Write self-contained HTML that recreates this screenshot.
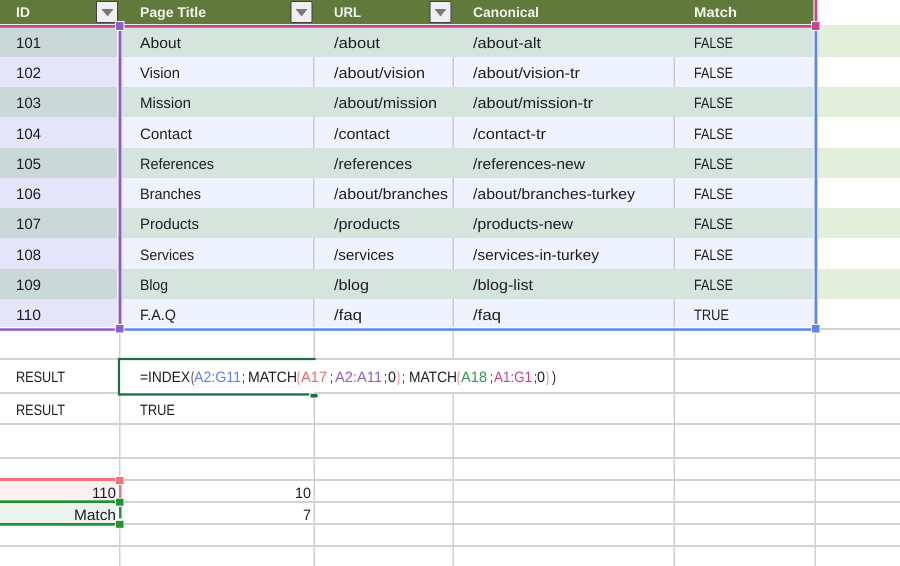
<!DOCTYPE html>
<html><head><meta charset="utf-8"><style>
html,body{margin:0;padding:0;background:#fff;width:900px;height:566px;overflow:hidden}
svg{display:block}
text{font-family:"Liberation Sans",sans-serif;font-size:15px;fill:#1c1c24;text-rendering:geometricPrecision}
.h{font-weight:bold;fill:#f2f4ec;font-size:14px}
</style></head><body>
<svg width="900" height="566" viewBox="0 0 900 566" xmlns="http://www.w3.org/2000/svg">
<rect width="900" height="566" fill="#fff"/>
<!-- header -->
<rect x="0" y="0" width="813.500" height="24" fill="#5f7a3b"/>
<!-- rows -->
<g fill="#d5e5dd">
<rect y="27" width="815" height="30"/><rect y="87" width="815" height="30"/><rect y="148" width="815" height="30"/><rect y="208" width="815" height="30"/><rect y="269" width="815" height="30"/>
</g>
<g fill="#eff2ff">
<rect y="57" width="815" height="30"/><rect y="117" width="815" height="31"/><rect y="178" width="815" height="30"/><rect y="238" width="815" height="31"/><rect y="299" width="815" height="28"/>
</g>
<g fill="#cbd8d8">
<rect y="27" width="117" height="30"/><rect y="87" width="117" height="30"/><rect y="148" width="117" height="30"/><rect y="208" width="117" height="30"/><rect y="269" width="117" height="30"/>
</g>
<g fill="#e5e4f9">
<rect y="57" width="117" height="30"/><rect y="117" width="117" height="31"/><rect y="178" width="117" height="30"/><rect y="238" width="117" height="31"/><rect y="299" width="117" height="28"/>
</g>
<g fill="#e3eedb">
<rect x="818" y="25" width="82" height="32"/><rect x="818" y="87" width="82" height="30"/><rect x="818" y="148" width="82" height="30"/><rect x="818" y="208" width="82" height="30"/><rect x="818" y="269" width="82" height="30"/>
</g>
<!-- white halo around range borders -->
<g fill="#fff">
<rect x="117" y="24" width="5" height="305"/>
<rect x="813.500" y="24" width="4.500" height="305"/>
</g>
<!-- separators on light rows -->
<g fill="#c9cad4">
<rect x="313" y="57" width="1.5" height="30"/><rect x="452.500" y="57" width="1.500" height="30"/><rect x="673.500" y="57" width="1.500" height="30"/>
<rect x="313" y="117" width="1.5" height="31"/><rect x="452.500" y="117" width="1.500" height="31"/><rect x="673.500" y="117" width="1.500" height="31"/>
<rect x="313" y="178" width="1.5" height="30"/><rect x="452.500" y="178" width="1.500" height="30"/><rect x="673.500" y="178" width="1.500" height="30"/>
<rect x="313" y="238" width="1.5" height="31"/><rect x="452.500" y="238" width="1.500" height="31"/><rect x="673.500" y="238" width="1.500" height="31"/>
<rect x="313" y="299" width="1.5" height="28"/><rect x="452.500" y="299" width="1.500" height="28"/><rect x="673.500" y="299" width="1.500" height="28"/>
</g>
<!-- lower grid -->
<g fill="#d2d2d2">
<rect x="818" y="328" width="82" height="2"/>
<rect x="0" y="358" width="900" height="2"/>
<rect x="0" y="392" width="900" height="2"/>
<rect x="0" y="423" width="900" height="2"/>
<rect x="0" y="457" width="900" height="2"/>
<rect x="0" y="479" width="900" height="2"/>
<rect x="0" y="501" width="900" height="2"/>
<rect x="0" y="523" width="900" height="2"/>
<rect x="0" y="545" width="900" height="2"/>
<rect x="119" y="330" width="1.500" height="236"/>
<rect x="313.500" y="330" width="1.500" height="236"/>
<rect x="452.500" y="330" width="1.500" height="236"/>
<rect x="673.500" y="330" width="1.500" height="236"/>
<rect x="814.500" y="330" width="1.500" height="236"/>
</g>
<!-- bottom highlighted cells -->
<rect x="0" y="481" width="116" height="19" fill="#fdf0f0"/>
<rect x="0" y="503" width="116" height="20" fill="#eaf4ec"/>
<!-- header text -->
<text class="h" x="16" y="17" textLength="14" lengthAdjust="spacingAndGlyphs">ID</text>
<text class="h" x="140" y="17" textLength="66" lengthAdjust="spacingAndGlyphs">Page Title</text>
<text class="h" x="334" y="17" textLength="27" lengthAdjust="spacingAndGlyphs">URL</text>
<text class="h" x="473" y="17" textLength="66" lengthAdjust="spacingAndGlyphs">Canonical</text>
<text class="h" x="694" y="17" textLength="43" lengthAdjust="spacingAndGlyphs">Match</text>
<!-- dropdown buttons -->
<g stroke="#3f3f46" stroke-width="1" fill="#f1eef1">
<rect x="96.500" y="1.500" width="21" height="21" rx="1"/>
<rect x="291" y="1.500" width="21" height="21" rx="1"/>
<rect x="430" y="1.500" width="21" height="21" rx="1"/>
</g>
<g fill="#77777c">
<path d="M101.500 9h12l-6 7.500z"/><path d="M295.500 9h12l-6 7.500z"/><path d="M434.500 9h12l-6 7.500z"/>
</g>
<!-- data -->
<g>
<text x="16" y="48" textLength="25" lengthAdjust="spacingAndGlyphs">101</text>
<text x="140" y="48" textLength="41" lengthAdjust="spacingAndGlyphs">About</text>
<text x="334" y="48" textLength="46" lengthAdjust="spacingAndGlyphs">/about</text>
<text x="473" y="48" textLength="68" lengthAdjust="spacingAndGlyphs">/about-alt</text>
<text x="694" y="48" textLength="39" lengthAdjust="spacingAndGlyphs">FALSE</text>

<text x="16" y="78" textLength="25" lengthAdjust="spacingAndGlyphs">102</text>
<text x="140" y="78" textLength="40" lengthAdjust="spacingAndGlyphs">Vision</text>
<text x="334" y="78" textLength="91" lengthAdjust="spacingAndGlyphs">/about/vision</text>
<text x="473" y="78" textLength="107" lengthAdjust="spacingAndGlyphs">/about/vision-tr</text>
<text x="694" y="78" textLength="39" lengthAdjust="spacingAndGlyphs">FALSE</text>

<text x="16" y="108" textLength="25" lengthAdjust="spacingAndGlyphs">103</text>
<text x="140" y="108" textLength="51" lengthAdjust="spacingAndGlyphs">Mission</text>
<text x="334" y="108" textLength="103" lengthAdjust="spacingAndGlyphs">/about/mission</text>
<text x="473" y="108" textLength="120" lengthAdjust="spacingAndGlyphs">/about/mission-tr</text>
<text x="694" y="108" textLength="39" lengthAdjust="spacingAndGlyphs">FALSE</text>

<text x="16" y="139" textLength="25" lengthAdjust="spacingAndGlyphs">104</text>
<text x="140" y="139" textLength="52" lengthAdjust="spacingAndGlyphs">Contact</text>
<text x="334" y="139" textLength="56" lengthAdjust="spacingAndGlyphs">/contact</text>
<text x="473" y="139" textLength="73" lengthAdjust="spacingAndGlyphs">/contact-tr</text>
<text x="694" y="139" textLength="39" lengthAdjust="spacingAndGlyphs">FALSE</text>

<text x="16" y="169" textLength="25" lengthAdjust="spacingAndGlyphs">105</text>
<text x="140" y="169" textLength="74" lengthAdjust="spacingAndGlyphs">References</text>
<text x="334" y="169" textLength="78" lengthAdjust="spacingAndGlyphs">/references</text>
<text x="473" y="169" textLength="112" lengthAdjust="spacingAndGlyphs">/references-new</text>
<text x="694" y="169" textLength="39" lengthAdjust="spacingAndGlyphs">FALSE</text>

<text x="16" y="199" textLength="25" lengthAdjust="spacingAndGlyphs">106</text>
<text x="140" y="199" textLength="61" lengthAdjust="spacingAndGlyphs">Branches</text>
<text x="334" y="199" textLength="114" lengthAdjust="spacingAndGlyphs">/about/branches</text>
<text x="473" y="199" textLength="162" lengthAdjust="spacingAndGlyphs">/about/branches-turkey</text>
<text x="694" y="199" textLength="39" lengthAdjust="spacingAndGlyphs">FALSE</text>

<text x="16" y="229" textLength="25" lengthAdjust="spacingAndGlyphs">107</text>
<text x="140" y="229" textLength="59" lengthAdjust="spacingAndGlyphs">Products</text>
<text x="334" y="229" textLength="66" lengthAdjust="spacingAndGlyphs">/products</text>
<text x="473" y="229" textLength="100" lengthAdjust="spacingAndGlyphs">/products-new</text>
<text x="694" y="229" textLength="39" lengthAdjust="spacingAndGlyphs">FALSE</text>

<text x="16" y="260" textLength="25" lengthAdjust="spacingAndGlyphs">108</text>
<text x="140" y="260" textLength="54" lengthAdjust="spacingAndGlyphs">Services</text>
<text x="334" y="260" textLength="60" lengthAdjust="spacingAndGlyphs">/services</text>
<text x="473" y="260" textLength="126" lengthAdjust="spacingAndGlyphs">/services-in-turkey</text>
<text x="694" y="260" textLength="39" lengthAdjust="spacingAndGlyphs">FALSE</text>

<text x="16" y="290" textLength="25" lengthAdjust="spacingAndGlyphs">109</text>
<text x="140" y="290" textLength="28" lengthAdjust="spacingAndGlyphs">Blog</text>
<text x="334" y="290" textLength="35" lengthAdjust="spacingAndGlyphs">/blog</text>
<text x="473" y="290" textLength="60" lengthAdjust="spacingAndGlyphs">/blog-list</text>
<text x="694" y="290" textLength="39" lengthAdjust="spacingAndGlyphs">FALSE</text>

<text x="16" y="320" textLength="25" lengthAdjust="spacingAndGlyphs">110</text>
<text x="140" y="320" textLength="36" lengthAdjust="spacingAndGlyphs">F.A.Q</text>
<text x="334" y="320" textLength="28" lengthAdjust="spacingAndGlyphs">/faq</text>
<text x="473" y="320" textLength="28" lengthAdjust="spacingAndGlyphs">/faq</text>
<text x="694" y="320" textLength="35" lengthAdjust="spacingAndGlyphs">TRUE</text>

<text x="16" y="382" textLength="49" lengthAdjust="spacingAndGlyphs">RESULT</text>
<text x="16" y="415" textLength="49" lengthAdjust="spacingAndGlyphs">RESULT</text>
<text x="140" y="415" textLength="35" lengthAdjust="spacingAndGlyphs">TRUE</text>

<text x="92" y="498" textLength="24" lengthAdjust="spacingAndGlyphs">110</text>
<text x="74" y="520" textLength="42" lengthAdjust="spacingAndGlyphs">Match</text>
<text x="295" y="498" textLength="16" lengthAdjust="spacingAndGlyphs">10</text>
<text x="303" y="520" textLength="8" lengthAdjust="spacingAndGlyphs">7</text>
</g>
<!-- formula -->
<rect x="119" y="360" width="195" height="33" fill="#fff"/>
<rect x="314" y="360" width="260" height="32" fill="#fff"/>
<text x="140" y="382" textLength="50" lengthAdjust="spacingAndGlyphs">=INDEX</text>
<text x="191" y="382" style="fill:#1c1c24" textLength="3" lengthAdjust="spacingAndGlyphs">(</text>
<text x="194" y="382" style="fill:#5b86ee" textLength="47" lengthAdjust="spacingAndGlyphs">A2:G11</text>
<text x="242" y="382" textLength="3" lengthAdjust="spacingAndGlyphs">;</text>
<text x="248" y="382" textLength="49" lengthAdjust="spacingAndGlyphs">MATCH</text>
<text x="297" y="382" style="fill:#f0686f" textLength="3" lengthAdjust="spacingAndGlyphs">(</text>
<text x="301" y="382" style="fill:#f0686f" textLength="26" lengthAdjust="spacingAndGlyphs">A17</text>
<text x="330" y="382" textLength="3" lengthAdjust="spacingAndGlyphs">;</text>
<text x="335" y="382" style="fill:#8e62c8" textLength="47" lengthAdjust="spacingAndGlyphs">A2:A11</text>
<text x="384" y="382" textLength="3" lengthAdjust="spacingAndGlyphs">;</text>
<text x="388" y="382" textLength="8" lengthAdjust="spacingAndGlyphs">0</text>
<text x="397" y="382" style="fill:#f0686f" textLength="3" lengthAdjust="spacingAndGlyphs">)</text>
<text x="402" y="382" textLength="3" lengthAdjust="spacingAndGlyphs">;</text>
<text x="409" y="382" textLength="48" lengthAdjust="spacingAndGlyphs">MATCH</text>
<text x="457" y="382" style="fill:#e8707a" textLength="3" lengthAdjust="spacingAndGlyphs">(</text>
<text x="461" y="382" style="fill:#2f9a4a" textLength="26" lengthAdjust="spacingAndGlyphs">A18</text>
<text x="490" y="382" textLength="3" lengthAdjust="spacingAndGlyphs">;</text>
<text x="494" y="382" style="fill:#c8448e" textLength="38" lengthAdjust="spacingAndGlyphs">A1:G1</text>
<text x="534" y="382" textLength="3" lengthAdjust="spacingAndGlyphs">;</text>
<text x="537" y="382" textLength="8" lengthAdjust="spacingAndGlyphs">0</text>
<text x="546" y="382" style="fill:#e8707a" textLength="3" lengthAdjust="spacingAndGlyphs">)</text>
<text x="552" y="382" textLength="4" lengthAdjust="spacingAndGlyphs">)</text>
<!-- range borders -->
<rect x="0" y="24" width="814" height="1" fill="#e9efe2"/>
<rect x="0" y="25" width="815" height="2.700" fill="#c8448e"/>
<rect x="814.500" y="0" width="2.800" height="26" fill="#c8448e"/>
<rect x="118.500" y="26" width="3" height="304" fill="#8e5fc8"/>
<rect x="0" y="328.300" width="119" height="2.500" fill="#8e5fc8"/>
<rect x="121" y="328.300" width="695" height="2.500" fill="#5b86ee"/>
<rect x="814.500" y="27" width="2.800" height="304" fill="#5b86ee"/>
<!-- handles -->
<rect x="115.500" y="21.500" width="8.500" height="9" fill="#8e5fc8" stroke="#fff" stroke-width="1"/>
<rect x="811.500" y="21.500" width="8.500" height="9" fill="#c8448e" stroke="#fff" stroke-width="1"/>
<rect x="115.500" y="324.500" width="8.500" height="8.500" fill="#8e5fc8" stroke="#fff" stroke-width="1"/>
<rect x="811.500" y="324.500" width="8.500" height="8.500" fill="#5b86ee" stroke="#fff" stroke-width="1"/>
<!-- active cell -->
<path d="M315.500 359H119V394.500H309" fill="none" stroke="#1d6f45" stroke-width="2.200"/>
<rect x="310.500" y="394" width="7" height="3.500" fill="#1d6f45"/>
<!-- bottom range borders -->
<rect x="0" y="478" width="115" height="3" fill="#f8717a"/>
<rect x="115" y="476.500" width="9" height="8" fill="#fff"/>
<rect x="116" y="477" width="7.500" height="7" fill="#f8717a"/>
<rect x="118" y="484" width="5" height="15" fill="#fff"/>
<rect x="119" y="485" width="2.500" height="13" fill="#f8717a"/>
<rect x="0" y="500.300" width="115" height="2.700" fill="#229138"/>
<rect x="115" y="498" width="9" height="8.500" fill="#fff"/>
<rect x="116" y="498.700" width="7.500" height="7" fill="#229138"/>
<rect x="118" y="506.500" width="5" height="14" fill="#fff"/>
<rect x="119" y="507" width="2.500" height="11.500" fill="#229138"/>
<rect x="0" y="523" width="115" height="2.700" fill="#229138"/>
<rect x="115" y="520" width="9" height="8.500" fill="#fff"/>
<rect x="116" y="520.800" width="7.500" height="7" fill="#229138"/>
</svg>
</body></html>
